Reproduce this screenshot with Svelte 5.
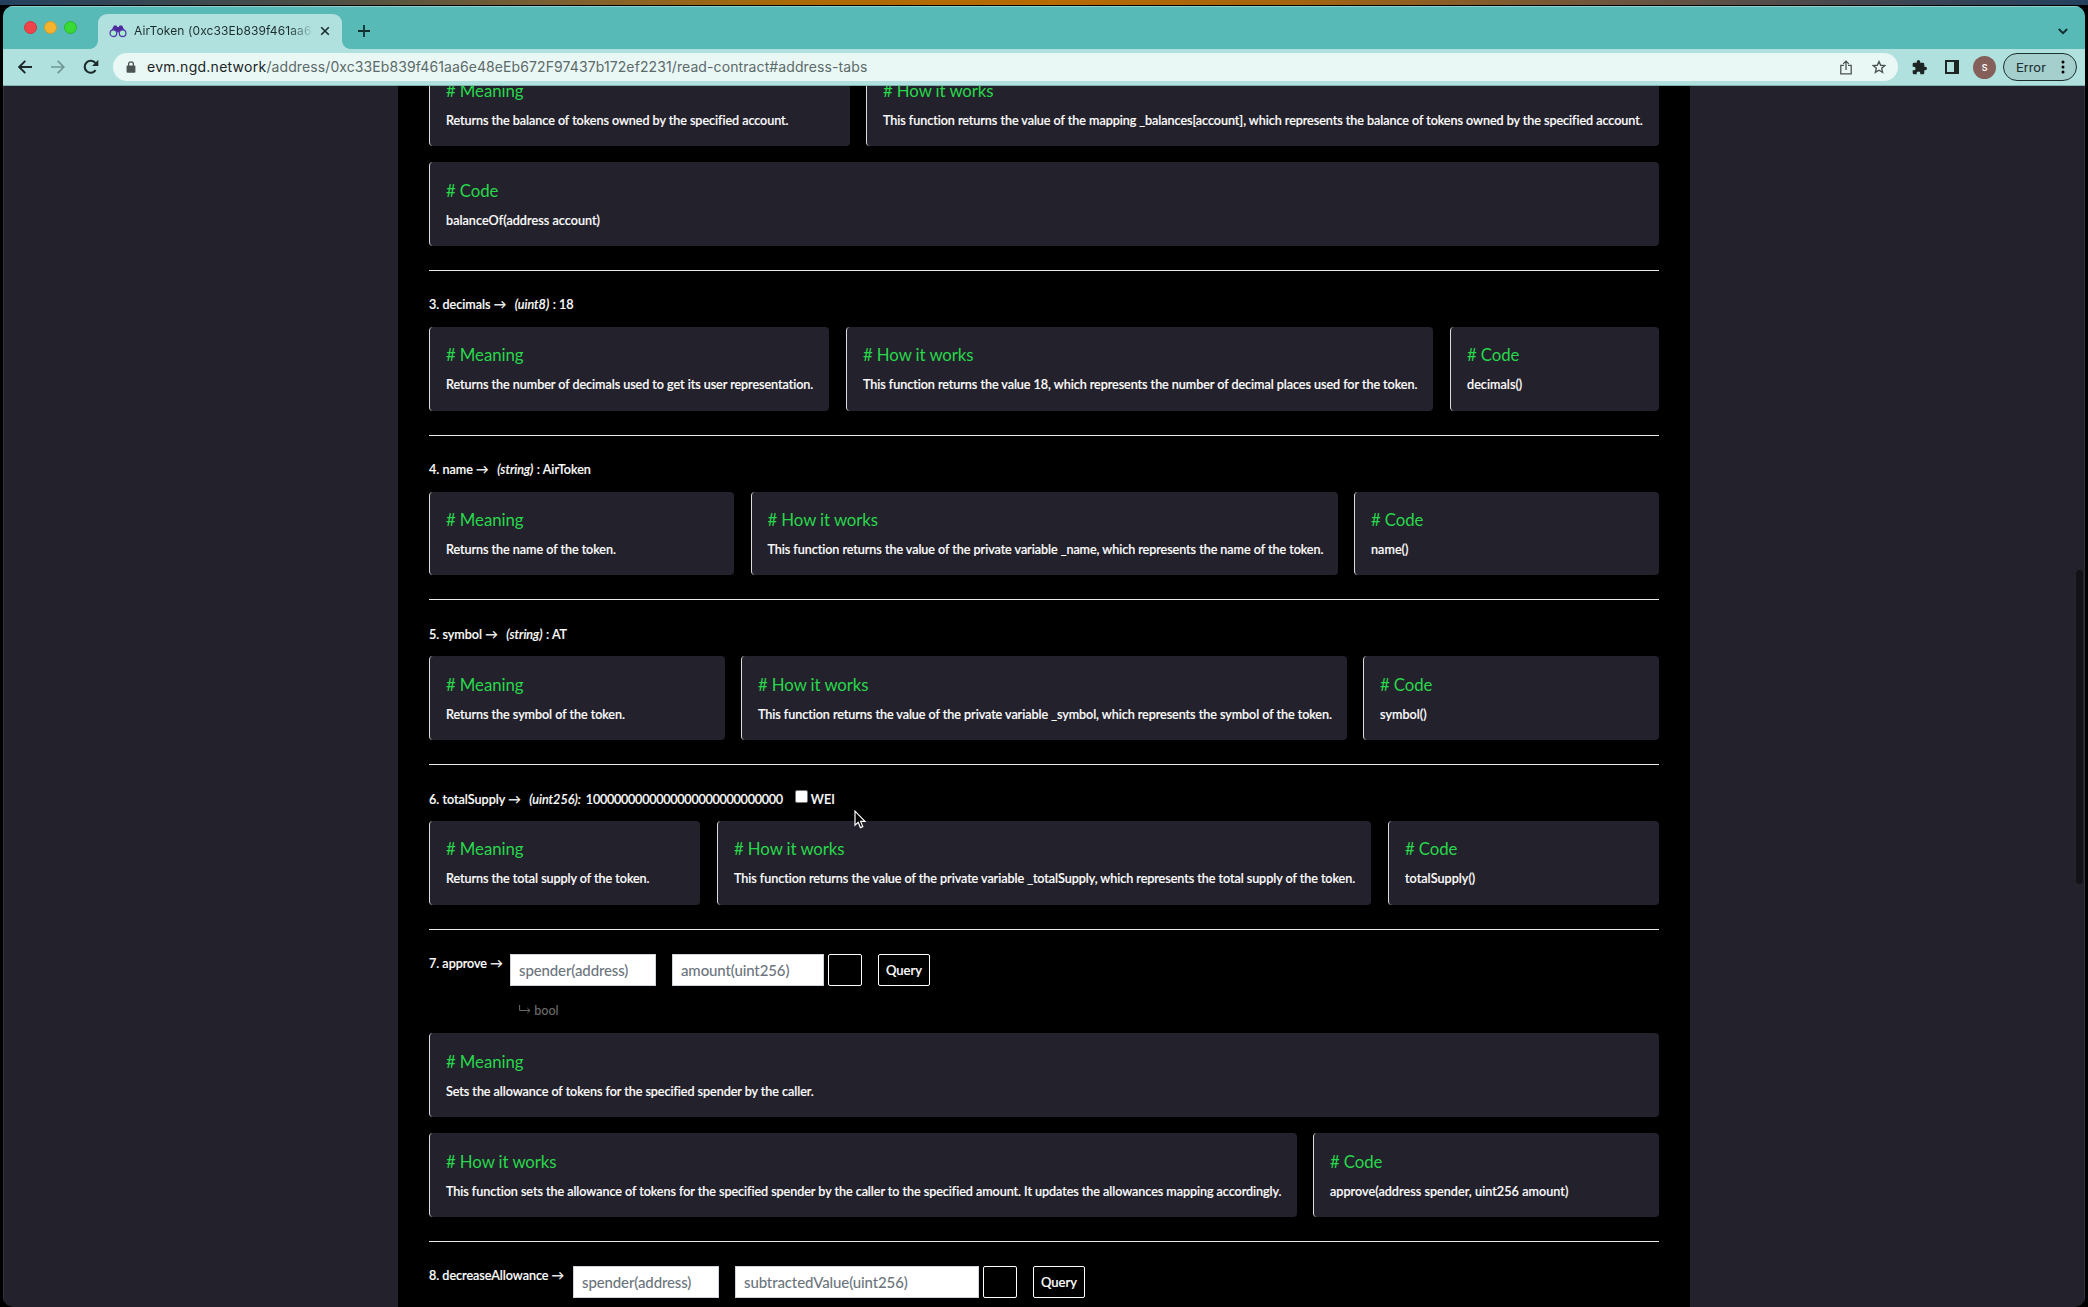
<script>
  const how = 'How it works';
  const rows = [
    { cards: [[
      { w: 421, t: 'Meaning', b: 'Returns the balance of tokens owned by the specified account.' },
      { w: 793, t: how, b: 'This function returns the value of the mapping _balances[account], which represents the balance of tokens owned by the specified account.' }
    ], [{ w: 1230, t: 'Code', b: 'balanceOf(address account)' }]] },
    { label: '3. decimals', type: '(uint8)', value: ': 18', cards: [[
      { w: 400, t: 'Meaning', b: 'Returns the number of decimals used to get its user representation.' },
      { w: 587, t: how, b: 'This function returns the value 18, which represents the number of decimal places used for the token.' },
      { w: 209, t: 'Code', b: 'decimals()' }
    ]] },
    { label: '4. name', type: '(string)', value: ': AirToken', cards: [[
      { w: 305, t: 'Meaning', b: 'Returns the name of the token.' },
      { w: 587, t: how, b: 'This function returns the value of the private variable _name, which represents the name of the token.' },
      { w: 305, t: 'Code', b: 'name()' }
    ]] },
    { label: '5. symbol', type: '(string)', value: ': AT', cards: [[
      { w: 296, t: 'Meaning', b: 'Returns the symbol of the token.' },
      { w: 606, t: how, b: 'This function returns the value of the private variable _symbol, which represents the symbol of the token.' },
      { w: 296, t: 'Code', b: 'symbol()' }
    ]] },
    { label: '6. totalSupply', type: '(uint256):', value: '1000000000000000000000000000', wei: true, cards: [[
      { w: 271, t: 'Meaning', b: 'Returns the total supply of the token.' },
      { w: 654, t: how, b: 'This function returns the value of the private variable _totalSupply, which represents the total supply of the token.' },
      { w: 271, t: 'Code', b: 'totalSupply()' }
    ]] },
    { label: '7. approve', lw: 81, inputs: [{ p: 'spender(address)', w: 146 }, { p: 'amount(uint256)', w: 152 }], cards: [
      [{ w: 1230, t: 'Meaning', b: 'Sets the allowance of tokens for the specified spender by the caller.' }],
      [
        { w: 868, t: how, b: 'This function sets the allowance of tokens for the specified spender by the caller to the specified amount. It updates the allowances mapping accordingly.' },
        { w: 346, t: 'Code', b: 'approve(address spender, uint256 amount)' }
      ]
    ] },
    { label: '8. decreaseAllowance', lw: 144, inputs: [{ p: 'spender(address)', w: 146 }, { p: 'subtractedValue(uint256)', w: 244 }], cards: [] }
  ];
</script>

<div class="desktop">
  <div class="wallpaper"></div>
  <div class="window">
    <div class="tabs">
      <div class="lights"><i class="red"></i><i class="amber"></i><i class="green"></i></div>
      <div class="tab">
        <svg class="fav" width="18" height="14" viewBox="0 0 18 14">
          <path d="M2.600 6 L5 1.600 H7.400 L8.300 3 H9.700 L10.600 1.600 H13 L15.400 6 L16.500 9 H10 L9 7.500 L8 9 H1.500Z" fill="#4c2a9c" />
          <circle cx="4.4" cy="9.2" r="3.3" fill="#a6efcf" stroke="#5a3aa8" stroke-width="1.3" />
          <circle cx="13.6" cy="9.2" r="3.3" fill="#a6efcf" stroke="#5a3aa8" stroke-width="1.3" />
        </svg>
        <span class="tabtitle">AirToken (0xc33Eb839f461aa6</span>
        <svg class="close" width="10" height="10" viewBox="0 0 10 10"><path d="M1.2 1.2 8.8 8.8M8.8 1.2 1.2 8.8" stroke="#1c2b2b" stroke-width="1.6" /></svg>
      </div>
      <svg class="plus" width="12" height="12" viewBox="0 0 12 12"><path d="M6 0V12M0 6H12" stroke="#12302f" stroke-width="1.8" /></svg>
      <svg class="chev" width="10" height="7" viewBox="0 0 10 7"><path d="M.8 1 5 5.2 9.2 1" fill="none" stroke="#12302f" stroke-width="2" /></svg>
    </div>
    <div class="toolbar">
      <svg class="back" width="14" height="14" viewBox="0 0 14 14"><path d="M14 7H1.5M7.3 .8 1.2 7l6.1 6.2" fill="none" stroke="#1d2a2a" stroke-width="1.9" /></svg>
      <svg class="fwd" width="14" height="14" viewBox="0 0 14 14"><path d="M0 7H12.5M6.7 .8 12.8 7l-6.1 6.2" fill="none" stroke="#6f9795" stroke-width="1.7" /></svg>
      <svg class="reload" width="16" height="16" viewBox="0 0 16 16"><path d="M12.6 11.2A6 6 0 1 1 12.4 4" fill="none" stroke="#1d2a2a" stroke-width="2.1" /><path d="M15.3 .8V7H9.1Z" fill="#1d2a2a" /></svg>
      <div class="omnibox">
        <svg width="10" height="12" viewBox="0 0 10 12"><rect x=".6" y="4.4" width="8.8" height="7.4" rx="1" fill="#4c5453" /><path d="M2.6 5V3.2a2.4 2.4 0 0 1 4.8 0V5" fill="none" stroke="#4c5453" stroke-width="1.3" /></svg>
        <span class="url"><b>evm.ngd.network</b>/address/0xc33Eb839f461aa6e48eEb672F97437b172ef2231/read-contract#address-tabs</span>
        <svg class="share" width="12" height="15" viewBox="0 0 12 15"><path d="M4 5.4H.8V13.8H11.2V5.4H8M6 10V1.4M3.2 3.9 6 1.1 8.8 3.9" fill="none" stroke="#4c5453" stroke-width="1.3" /></svg>
        <svg class="star" width="14" height="14" viewBox="0 0 24 24"><path d="M12 2.5 14.9 9 22 9.6 16.600 14.300 18.200 21.200 12 17.500 5.800 21.200 7.400 14.300 2 9.600 9.100 9Z" fill="none" stroke="#4c5453" stroke-width="2.3" /></svg>
      </div>
      <svg class="puzzle" width="15" height="15" viewBox="1 1 22 22"><path d="M20.500 11H19V7a2 2 0 0 0-2-2h-4V3.500a2.500 2.500 0 0 0-5 0V5H4a2 2 0 0 0-2 2v3.800h1.500a2.700 2.700 0 0 1 0 5.400H2V20a2 2 0 0 0 2 2h3.800v-1.500a2.700 2.700 0 0 1 5.400 0V22H17a2 2 0 0 0 2-2v-4h1.500a2.500 2.500 0 0 0 0-5z" fill="#1d2424" /></svg>
      <svg class="side" width="14" height="14" viewBox="0 0 14 14"><path d="M1 1H13V13H1Z" fill="none" stroke="#1d2424" stroke-width="2" /><path d="M9 0H14V14H9Z" fill="#1d2424" /></svg>
      <span class="avatar">s</span>
      <span class="error">Error <svg width="4" height="14" viewBox="0 0 4 14"><circle cx="2" cy="2" r="1.5" /><circle cx="2" cy="7" r="1.5" /><circle cx="2" cy="12" r="1.5" /></svg></span>
    </div>
    <div class="page">
      <main>
        {#each rows as row}
          <section class:first={!row.label}>
            {#if row.label && !row.inputs}
              <div class="head">
                <span>{row.label} →</span><em>{row.type}</em><span class:digits={row.wei}>{row.value}</span>
                {#if row.wei}<i class="check"></i><span>WEI</span>{/if}
              </div>
            {:else if row.inputs}
              <div class="form">
                <span class="flabel" style:width="{row.lw}px">{row.label} →</span>
                {#each row.inputs as f, i}
                  <span class="field" class:second={i > 0} style:width="{f.w}px">{f.p}</span>
                {/each}
                <span class="empty"></span>
                <span class="query">Query</span>
              </div>
              {#if row.cards.length}
                <div class="returns"><svg width="12" height="10" viewBox="0 0 12 10"><path d="M.6 0V5.500H11M8.300 3 11 5.500 8.300 8" fill="none" stroke="#6a6a6a" /></svg> bool</div>
              {/if}
            {/if}
            {#each row.cards as line}
              <div class="cards">
                {#each line as c}
                  <article style:flex-basis="{c.w}px">
                    <h3># {c.t}</h3>
                    <p class:code={c.t === 'Code'}>{c.b}</p>
                  </article>
                {/each}
              </div>
            {/each}
          </section>
        {/each}
      </main>
      <div class="thumb"></div>
    </div>
  </div>
  <svg class="pointer" width="13" height="19" viewBox="0 0 13 19"><path d="M1 1.200V15.200L4.200 12.300 6.400 17.600 8.800 16.600 6.600 11.400H11Z" fill="#000" stroke="#fff" stroke-width="1.200" /></svg>
</div>

<style>
  :global(body) { background: #000; }
  .desktop { position: relative; width: 2088px; height: 1307px; overflow: hidden; background: #000; box-sizing: border-box; }
  .wallpaper { height: 5px; background: linear-gradient(90deg, #24405e, #4a4f46 15%, #7d6030 27%, #ab6a06 38%, #b86a02 50%, #a4640f 62%, #6b5540 78%, #3a4453 92%, #24405e); }
  .window { margin: 1px 3px 0; height: 1301px; border-radius: 10px; overflow: hidden; background: #23212b; display: flex; flex-direction: column; font-family: Inter, sans-serif; }
  .tabs { height: 43px; flex: none; background: #58bab7; display: flex; box-sizing: border-box; border-top: 1px solid #8fd0cd; }
  .lights { display: flex; gap: 7px; padding: 14px 0 0 21px; width: 74px; }
  .lights i { width: 13px; height: 13px; border-radius: 50%; box-sizing: border-box; }
  .red { background: #ee444a; border: 1px solid #d4353b; }
  .amber { background: #f6b42e; border: 1px solid #d99a22; }
  .green { background: #39d936; border: 1px solid #2ab82b; }
  .tab { position: relative; width: 244px; height: 35px; margin-top: 7px; background: #b0e1de; border-radius: 9px 9px 0 0; display: flex; align-items: center; box-sizing: border-box; padding: 0 12px 2px 12px; }
  .tab::before, .tab::after { content: ''; position: absolute; bottom: 0; width: 8px; height: 8px; }
  .tab::before { left: -8px; background: radial-gradient(circle at 0 0, transparent 7.5px, #b0e1de 8px); }
  .tab::after { right: -8px; background: radial-gradient(circle at 100% 0, transparent 7.5px, #b0e1de 8px); }
  .fav { margin-left: -1px; }
  .tabtitle { margin-left: 7px; width: 180px; white-space: nowrap; font-size: 12px; letter-spacing: .12px; color: #1b2e2e; mask-image: linear-gradient(90deg, #000 86%, transparent); }
  .close { margin-left: auto; }
  .plus { margin: 18px 0 0 16px; }
  .chev { margin: 21px 17px 0 auto; }
  .toolbar { height: 37px; flex: none; box-sizing: border-box; border-bottom: 1px solid #7fb5b1; background: #b0e1de; display: flex; align-items: center; }
  .back { margin-left: 15px; }
  .fwd { margin-left: 19px; }
  .reload { margin-left: 18px; }
  .omnibox { margin-left: 14px; width: 1785px; height: 28px; border-radius: 14px; background: #e9f7f5; display: flex; align-items: center; padding: 0 12px 0 13px; box-sizing: border-box; }
  .url { margin-left: 11px; padding-bottom: 1px; font-size: 14px; letter-spacing: .1px; color: #5c6a69; white-space: nowrap; }
  .url b { font-weight: 400; color: #1b2525; letter-spacing: .26px; }
  .share { margin-left: auto; margin-right: 20px; }
  .puzzle { margin-left: 14px; }
  .side { margin-left: 18px; }
  .avatar { margin-left: 14px; width: 23px; height: 23px; border-radius: 50%; background: #85605a; color: #fff; font: 12px/22px Roboto, sans-serif; text-align: center; }
  .error { margin-left: 7px; width: 74px; height: 28px; border: 1px solid #1d2f2f; border-radius: 14px; background: #a5cfcc; box-sizing: border-box; padding: 0 11px 0 12px; display: flex; align-items: center; justify-content: space-between; font: 13.500px Roboto, sans-serif; letter-spacing: .2px; color: #1d2f2f; }
  .page { flex: 1; min-height: 0; overflow: hidden; position: relative; box-sizing: border-box; border: solid #33323b; border-width: 0 1px; }
  main { width: 1292px; height: 1221px; margin-left: 394px; background: #000; box-sizing: border-box; padding: 0 31px; color: #fff; font: 500 12.600px/16px Lato, sans-serif; -webkit-text-stroke: .2px; overflow: hidden; }
  section { border-top: 1px solid #ecebea; padding-bottom: 24px; box-sizing: border-box; }
  .first { border: 0; margin-top: -23.500px; }
  .head { height: 56px; box-sizing: border-box; padding-top: 26.600px; display: flex; white-space: pre; align-items: flex-start; }
  .head em { margin: 0 3.500px 0 8.500px; }
  .digits { margin-left: 1.500px; letter-spacing: -.27px; }
  .check { width: 13px; height: 13px; margin: -2px 3px 0 12px; box-sizing: border-box; border: 1px solid #777; border-radius: 2px; background: #fff; }
  .form { display: flex; padding-top: 24px; white-space: nowrap; }
  .flabel { padding-top: 2px; letter-spacing: -.03px; }
  .field { height: 32px; background: #fff; border: 1px solid #ced4da; box-sizing: border-box; padding: 7px 8px; color: #6c757d; font-size: 15px; letter-spacing: -.12px; -webkit-text-stroke: 0; }
  .second { margin-left: 16px; }
  .empty { width: 34px; height: 32px; margin-left: 4px; border: 1px solid #fff; border-radius: 2px; box-sizing: border-box; }
  .query { margin-left: 16px; width: 52px; height: 32px; border: 1px solid #fff; border-radius: 2px; box-sizing: border-box; text-align: center; line-height: 30px; font-size: 13px; }
  .returns { height: 47.700px; box-sizing: border-box; padding: 17.500px 0 0 90px; color: #6a6a6a; -webkit-text-stroke: 0; }
  .cards { display: flex; justify-content: space-between; }
  .cards + .cards { margin-top: 16px; }
  article { flex: 0 0 auto; height: 83.700px; box-sizing: border-box; background: #23212b; border-left: 1px solid #dcdcdc; border-radius: 4px; padding: 18.500px 0 0 16px; white-space: nowrap; }
  h3 { margin: 0; font: 400 16.800px/20px Lato, sans-serif; letter-spacing: -.08px; color: #28d74b; -webkit-text-stroke: 0; }
  p { margin: 12px 0 0; letter-spacing: -.055px; }
  .code { letter-spacing: .05px; }
  .thumb { position: absolute; right: 1px; top: 484px; width: 7px; height: 314px; border-radius: 4px; background: #131217; }
  .pointer { position: absolute; left: 854px; top: 810px; }
</style>
